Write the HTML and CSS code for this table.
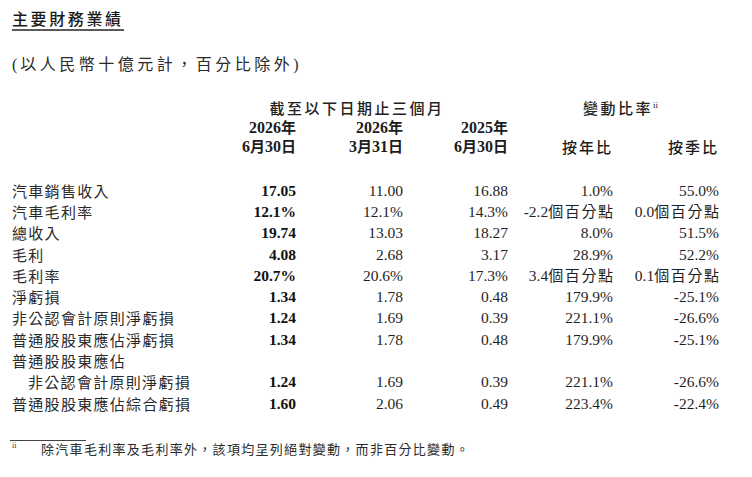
FILE: index.html
```html
<!DOCTYPE html>
<html lang="zh-Hant">
<head>
<meta charset="utf-8">
<title>主要財務業績</title>
<link rel="stylesheet" href="styles.css">
</head>
<body>
<div class="page">
  <h1 class="title">主要財務業績</h1>
  <p class="subtitle"><span class="paren">(</span>以人民幣十億元計，百分比除外<span class="paren">)</span></p>

  <table class="fin">
    <colgroup>
      <col class="c-label">
      <col class="c-1">
      <col class="c-2">
      <col class="c-3">
      <col class="c-4">
      <col class="c-5">
    </colgroup>
    <thead>
      <tr class="h1">
        <th></th>
        <th colspan="3" class="group">截至以下日期止三個月</th>
        <th colspan="2" class="group group-chg">變動比率<sup class="sup">ii</sup></th>
      </tr>
      <tr class="h2">
        <th></th>
        <th class="date">2026<span class="cj">年</span></th>
        <th class="date">2026<span class="cj">年</span></th>
        <th class="date">2025<span class="cj">年</span></th>
        <th></th>
        <th></th>
      </tr>
      <tr class="h3">
        <th></th>
        <th class="date">6<span class="cj">月</span>30<span class="cj">日</span></th>
        <th class="date">3<span class="cj">月</span>31<span class="cj">日</span></th>
        <th class="date">6<span class="cj">月</span>30<span class="cj">日</span></th>
        <th class="chg">按年比</th>
        <th class="chg">按季比</th>
      </tr>
    </thead>
    <tbody>
      <tr><td class="lbl">汽車銷售收入</td><td class="b">17.05</td><td>11.00</td><td>16.88</td><td>1.0%</td><td>55.0%</td></tr>
      <tr><td class="lbl">汽車毛利率</td><td class="b">12.1%</td><td>12.1%</td><td>14.3%</td><td>-2.2<span class="cj">個百分點</span></td><td>0.0<span class="cj">個百分點</span></td></tr>
      <tr><td class="lbl">總收入</td><td class="b">19.74</td><td>13.03</td><td>18.27</td><td>8.0%</td><td>51.5%</td></tr>
      <tr><td class="lbl">毛利</td><td class="b">4.08</td><td>2.68</td><td>3.17</td><td>28.9%</td><td>52.2%</td></tr>
      <tr><td class="lbl">毛利率</td><td class="b">20.7%</td><td>20.6%</td><td>17.3%</td><td>3.4<span class="cj">個百分點</span></td><td>0.1<span class="cj">個百分點</span></td></tr>
      <tr><td class="lbl">淨虧損</td><td class="b">1.34</td><td>1.78</td><td>0.48</td><td>179.9%</td><td>-25.1%</td></tr>
      <tr><td class="lbl">非公認會計原則淨虧損</td><td class="b">1.24</td><td>1.69</td><td>0.39</td><td>221.1%</td><td>-26.6%</td></tr>
      <tr><td class="lbl">普通股股東應佔淨虧損</td><td class="b">1.34</td><td>1.78</td><td>0.48</td><td>179.9%</td><td>-25.1%</td></tr>
      <tr><td class="lbl">普通股股東應佔</td><td></td><td></td><td></td><td></td><td></td></tr>
      <tr><td class="lbl indent">非公認會計原則淨虧損</td><td class="b">1.24</td><td>1.69</td><td>0.39</td><td>221.1%</td><td>-26.6%</td></tr>
      <tr><td class="lbl">普通股股東應佔綜合虧損</td><td class="b">1.60</td><td>2.06</td><td>0.49</td><td>223.4%</td><td>-22.4%</td></tr>
    </tbody>
  </table>

  <div class="footnote">
    <div class="rule"></div>
    <p class="note"><span class="mark">ii</span><span class="note-text">除汽車毛利率及毛利率外，該項均呈列絕對變動，而非百分比變動。</span></p>
  </div>
</div>
</body>
</html>
```

FILE: styles.css
```css
html, body {
  margin: 0;
  padding: 0;
  background: #ffffff;
}

body {
  color: #1c1c1c;
  font-family: "Liberation Serif", "Noto Sans CJK TC", serif;
}

.page {
  padding: 8px 0 0 12px;
}

.cj,
.title,
.subtitle,
.group,
.chg,
.lbl,
.note-text {
  font-family: "Noto Sans CJK TC", "Noto Sans CJK SC", sans-serif;
}

.title {
  display: inline-block;
  margin: 0;
  font-size: 16px;
  line-height: 20px;
  font-weight: 500;
  letter-spacing: 2.6px;
  color: #1a1a1a;
  padding-bottom: 1px;
  border-bottom: 2px solid #5a5a5a;
}

.subtitle {
  margin: 22px 0 0;
  font-size: 16px;
  line-height: 20px;
  letter-spacing: 3.5px;
  color: #2a2a2a;
}

.paren {
  font-family: "Liberation Serif", serif;
  letter-spacing: 3px;
}

.fin {
  margin-top: 23px;
  border-collapse: collapse;
  table-layout: fixed;
  width: 707px;
}

.c-label { width: 200px; }
.c-1 { width: 84px; }
.c-2 { width: 107px; }
.c-3 { width: 105px; }
.c-4 { width: 105px; }
.c-5 { width: 106px; }

.fin th,
.fin td {
  padding: 0;
  white-space: nowrap;
  vertical-align: middle;
  line-height: 16px;
}

.fin th {
  font-weight: bold;
  text-align: right;
}

.h1 th {
  height: 20px;
}

.h2 th {
  height: 19px;
}

.h3 th {
  height: 19px;
  padding-bottom: 24px;
}

.group {
  text-align: center !important;
  font-size: 15px;
  font-weight: 500 !important;
  letter-spacing: 2.5px;
  color: #222;
}

.fin th.group {
  padding-right: 6px;
}

.fin th.group-chg {
  padding-right: 0;
  padding-left: 14px;
}

.sup {
  font-family: "Liberation Serif", serif;
  font-size: 9px;
  font-weight: normal;
  letter-spacing: 0;
  vertical-align: 6px;
  line-height: 0;
}

.date {
  font-size: 16px;
  letter-spacing: 0;
}

.date .cj {
  font-size: 15px;
  font-weight: bold;
}

.chg {
  font-size: 15px;
  font-weight: 500 !important;
  letter-spacing: 2px;
}

.fin td {
  height: 21.3px;
  font-size: 15.5px;
  text-align: right;
  color: #1f1f1f;
}

.fin td.b {
  font-weight: bold;
  color: #111;
}

.fin td .cj {
  font-size: 15px;
  letter-spacing: 1.6px;
  margin-right: -1.6px;
}

.fin td.lbl {
  text-align: left;
  font-size: 15px;
  letter-spacing: 1.3px;
  color: #2a2a2a;
}

.fin td.indent {
  padding-left: 16px;
}

.footnote {
  margin-top: 26px;
}

.rule {
  width: 76px;
  height: 1px;
  background: #444;
  margin-left: -2px;
}

.note {
  margin: 0;
  display: flex;
  align-items: flex-start;
  line-height: 16px;
}

.mark {
  font-family: "Liberation Serif", serif;
  font-size: 8px;
  line-height: 10px;
  width: 29px;
  flex: none;
  color: #333;
}

.note-text {
  font-size: 13px;
  letter-spacing: 1.3px;
  color: #2a2a2a;
}
```
